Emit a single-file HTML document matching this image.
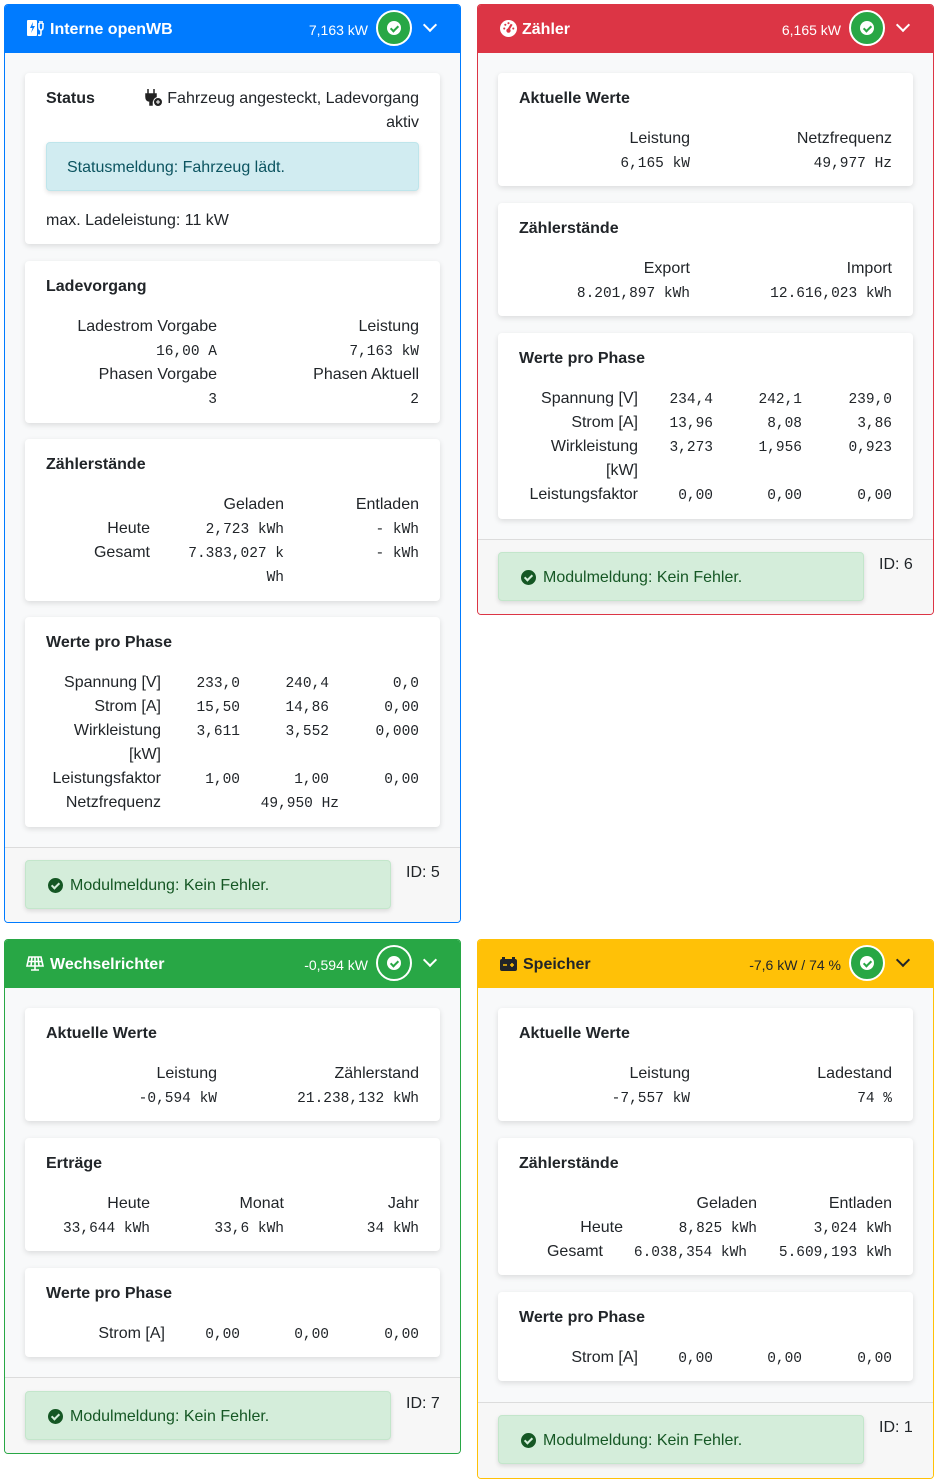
<!DOCTYPE html>
<html><head><meta charset="utf-8">
<style>
*{box-sizing:border-box;margin:0;padding:0}
html,body{width:941px;height:1483px;background:#fff;overflow:hidden}
body{position:relative;font-family:"Liberation Sans",sans-serif;color:#212529;font-size:16px}
.card{position:absolute;border:1px solid;border-radius:4px;overflow:hidden;background:#f8f9fa}
.hdr{position:absolute;left:0;right:0;top:0;height:48px}
.foot{position:absolute;left:0;right:0;bottom:0;background:#f7f7f7;border-top:1px solid #dcdcdc}
.in{position:absolute;background:#fff;border-radius:4px;box-shadow:0 2px 6px rgba(0,0,0,.12)}
.t{position:absolute;line-height:20px;white-space:nowrap;margin-top:2px}
.b{font-weight:bold}
.m{font-family:"Liberation Mono",monospace;font-size:14.5px}
.w{color:#fff}
.alert{position:absolute;background:#d4edda;border:1px solid #c3e6cb;border-radius:4px;box-shadow:0 2px 5px rgba(0,0,0,.12);color:#155724}
.ok{position:absolute;width:36px;height:36px;border-radius:50%;border:2px solid #fff;background:#28a745}
.ok::after{content:"";position:absolute;left:9px;top:9px;width:14px;height:14px;border-radius:50%;background:#fff}
.ok::before{content:"";position:absolute;left:14px;top:12px;width:3px;height:6px;border:solid #28a745;border-width:0 2px 2px 0;transform:rotate(45deg);z-index:2}
.chev{position:absolute;width:10px;height:10px;border:solid #fff;border-width:0 2px 2px 0;transform:rotate(45deg)}
.ci{position:absolute;width:15px;height:15px;border-radius:50%;background:#155724;margin-top:1px}
.ci::after{content:"";position:absolute;left:5px;top:3px;width:3px;height:6px;border:solid #d4edda;border-width:0 2px 2px 0;transform:rotate(45deg)}
</style></head><body>

<!-- Card 1 -->
<div class="card" style="left:4px;top:4px;width:457px;height:919px;border-color:#007bff">
 <div class="hdr" style="background:#007bff"></div>
 <div class="foot" style="height:75px"></div>
</div>
<svg style="position:absolute;left:27px;top:19px" width="18" height="18" viewBox="0 0 18 18"><rect x="0" y="1" width="10" height="16" rx="1" fill="#fff"/><path d="M6 3 L3 9 H5.5 L4 14 L8 7 H5.5 Z" fill="#007bff"/><path d="M12 4 V8 Q12 11 14 11 Q16 11 16 8 V4 M13 2V5 M15 2V5 M14 11 V15 Q14 17 11 16" stroke="#fff" stroke-width="1.6" fill="none"/></svg>
<div class="t b w" style="left:50px;top:18px">Interne openWB</div>
<div class="t w" style="right:573px;top:18px;font-size:14px">7,163 kW</div>
<div class="ok" style="left:376px;top:10px"></div>
<div class="chev" style="left:425px;top:20px"></div>

<div class="in" style="left:25px;top:73px;width:415px;height:171px"></div>
<div class="t b" style="left:46px;top:87px">Status</div>
<svg style="position:absolute;left:145px;top:89px" width="18" height="18" viewBox="0 0 18 18"><path d="M3 0V5 M9 0V5 M1 5H11V8Q11 12 7 12V16H5V12Q1 12 1 8Z" fill="#222" stroke="#222" stroke-width="1.5"/><circle cx="13" cy="13" r="4.5" fill="#222" stroke="#fff"/><path d="M11 13H15M13 11V15" stroke="#fff"/></svg>
<div class="t" style="right:522px;top:87px">Fahrzeug angesteckt, Ladevorgang</div>
<div class="t" style="right:522px;top:111px">aktiv</div>
<div style="position:absolute;left:46px;top:142px;width:373px;height:49px;background:#d1ecf1;border:1px solid #bee5eb;border-radius:4px;box-shadow:0 2px 5px rgba(0,0,0,.12)"></div>
<div class="t" style="left:67px;top:156px;color:#0c5460">Statusmeldung: Fahrzeug lädt.</div>
<div class="t" style="left:46px;top:209px">max. Ladeleistung: 11 kW</div>

<div class="in" style="left:25px;top:261px;width:415px;height:162px"></div>
<div class="t b" style="left:46px;top:275px">Ladevorgang</div>
<div class="t" style="right:724px;top:315px">Ladestrom Vorgabe</div>
<div class="t m" style="right:724px;top:340px">16,00 A</div>
<div class="t" style="right:724px;top:363px">Phasen Vorgabe</div>
<div class="t m" style="right:724px;top:388px">3</div>
<div class="t" style="right:522px;top:315px">Leistung</div>
<div class="t m" style="right:522px;top:340px">7,163 kW</div>
<div class="t" style="right:522px;top:363px">Phasen Aktuell</div>
<div class="t m" style="right:522px;top:388px">2</div>

<div class="in" style="left:25px;top:439px;width:415px;height:162px"></div>
<div class="t b" style="left:46px;top:453px">Zählerstände</div>
<div class="t" style="right:657px;top:493px">Geladen</div>
<div class="t" style="right:522px;top:493px">Entladen</div>
<div class="t" style="right:791px;top:517px">Heute</div>
<div class="t m" style="right:657px;top:518px">2,723 kWh</div>
<div class="t m" style="right:522px;top:518px">- kWh</div>
<div class="t" style="right:791px;top:541px">Gesamt</div>
<div class="t m" style="right:657px;top:542px">7.383,027 k</div>
<div class="t m" style="right:657px;top:566px">Wh</div>
<div class="t m" style="right:522px;top:542px">- kWh</div>

<div class="in" style="left:25px;top:617px;width:415px;height:210px"></div>
<div class="t b" style="left:46px;top:631px">Werte pro Phase</div>
<div class="t" style="right:780px;top:671px">Spannung [V]</div>
<div class="t" style="right:780px;top:695px">Strom [A]</div>
<div class="t" style="right:780px;top:719px">Wirkleistung</div>
<div class="t" style="right:780px;top:743px">[kW]</div>
<div class="t" style="right:780px;top:767px">Leistungsfaktor</div>
<div class="t" style="right:780px;top:791px">Netzfrequenz</div>
<div class="t m" style="right:701px;top:672px">233,0</div><div class="t m" style="right:612px;top:672px">240,4</div><div class="t m" style="right:522px;top:672px">0,0</div>
<div class="t m" style="right:701px;top:696px">15,50</div><div class="t m" style="right:612px;top:696px">14,86</div><div class="t m" style="right:522px;top:696px">0,00</div>
<div class="t m" style="right:701px;top:720px">3,611</div><div class="t m" style="right:612px;top:720px">3,552</div><div class="t m" style="right:522px;top:720px">0,000</div>
<div class="t m" style="right:701px;top:768px">1,00</div><div class="t m" style="right:612px;top:768px">1,00</div><div class="t m" style="right:522px;top:768px">0,00</div>
<div class="t m" style="right:602px;top:792px">49,950 Hz</div>

<div class="alert" style="left:25px;top:860px;width:366px;height:49px"></div>
<div class="ci" style="left:48px;top:877px"></div>
<div class="t" style="left:70px;top:874px;color:#155724">Modulmeldung: Kein Fehler.</div>
<div class="t" style="left:406px;top:861px">ID: 5</div>

<!-- Zähler -->
<div class="card" style="left:477px;top:4px;width:457px;height:611px;border-color:#dc3545">
 <div class="hdr" style="background:#dc3545"></div>
 <div class="foot" style="height:75px"></div>
</div>
<svg style="position:absolute;left:500px;top:20px" width="17" height="17" viewBox="0 0 16 16"><circle cx="8" cy="8" r="8" fill="#fff"/><path d="M8 9 L11 4" stroke="#dc3545" stroke-width="2"/><circle cx="8" cy="10" r="2" fill="#dc3545"/><circle cx="4" cy="8" r="1" fill="#dc3545"/><circle cx="5" cy="4.5" r="1" fill="#dc3545"/><circle cx="8" cy="3" r="1" fill="#dc3545"/><circle cx="12.5" cy="8" r="1" fill="#dc3545"/></svg>
<div class="t b w" style="left:522px;top:18px">Zähler</div>
<div class="t w" style="right:100px;top:18px;font-size:14px">6,165 kW</div>
<div class="ok" style="left:849px;top:10px"></div>
<div class="chev" style="left:898px;top:20px"></div>

<div class="in" style="left:498px;top:73px;width:415px;height:113px"></div>
<div class="t b" style="left:519px;top:87px">Aktuelle Werte</div>
<div class="t" style="right:251px;top:127px">Leistung</div>
<div class="t m" style="right:251px;top:152px">6,165 kW</div>
<div class="t" style="right:49px;top:127px">Netzfrequenz</div>
<div class="t m" style="right:49px;top:152px">49,977 Hz</div>

<div class="in" style="left:498px;top:203px;width:415px;height:113px"></div>
<div class="t b" style="left:519px;top:217px">Zählerstände</div>
<div class="t" style="right:251px;top:257px">Export</div>
<div class="t m" style="right:251px;top:282px">8.201,897 kWh</div>
<div class="t" style="right:49px;top:257px">Import</div>
<div class="t m" style="right:49px;top:282px">12.616,023 kWh</div>

<div class="in" style="left:498px;top:333px;width:415px;height:186px"></div>
<div class="t b" style="left:519px;top:347px">Werte pro Phase</div>
<div class="t" style="right:303px;top:387px">Spannung [V]</div>
<div class="t" style="right:303px;top:411px">Strom [A]</div>
<div class="t" style="right:303px;top:435px">Wirkleistung</div>
<div class="t" style="right:303px;top:459px">[kW]</div>
<div class="t" style="right:303px;top:483px">Leistungsfaktor</div>
<div class="t m" style="right:228px;top:388px">234,4</div><div class="t m" style="right:139px;top:388px">242,1</div><div class="t m" style="right:49px;top:388px">239,0</div>
<div class="t m" style="right:228px;top:412px">13,96</div><div class="t m" style="right:139px;top:412px">8,08</div><div class="t m" style="right:49px;top:412px">3,86</div>
<div class="t m" style="right:228px;top:436px">3,273</div><div class="t m" style="right:139px;top:436px">1,956</div><div class="t m" style="right:49px;top:436px">0,923</div>
<div class="t m" style="right:228px;top:484px">0,00</div><div class="t m" style="right:139px;top:484px">0,00</div><div class="t m" style="right:49px;top:484px">0,00</div>

<div class="alert" style="left:498px;top:552px;width:366px;height:49px"></div>
<div class="ci" style="left:521px;top:569px"></div>
<div class="t" style="left:543px;top:566px;color:#155724">Modulmeldung: Kein Fehler.</div>
<div class="t" style="left:879px;top:553px">ID: 6</div>

<!-- Wechselrichter -->
<div class="card" style="left:4px;top:939px;width:457px;height:515px;border-color:#28a745">
 <div class="hdr" style="background:#28a745"></div>
 <div class="foot" style="height:76px"></div>
</div>
<svg style="position:absolute;left:26px;top:956px" width="18" height="16" viewBox="0 0 18 16"><path d="M3 1H15L17 10H1Z M2 5.5H16 M9 1V10 M6 1L5 10 M12 1L13 10 M9 10V14 M5 14H13" stroke="#fff" stroke-width="1.6" fill="none"/></svg>
<div class="t b w" style="left:50px;top:953px">Wechselrichter</div>
<div class="t w" style="right:573px;top:953px;font-size:14px">-0,594 kW</div>
<div class="ok" style="left:376px;top:945px;background:#28a745"></div>
<div class="chev" style="left:425px;top:955px"></div>

<div class="in" style="left:25px;top:1008px;width:415px;height:113px"></div>
<div class="t b" style="left:46px;top:1022px">Aktuelle Werte</div>
<div class="t" style="right:724px;top:1062px">Leistung</div>
<div class="t m" style="right:724px;top:1087px">-0,594 kW</div>
<div class="t" style="right:522px;top:1062px">Zählerstand</div>
<div class="t m" style="right:522px;top:1087px">21.238,132 kWh</div>

<div class="in" style="left:25px;top:1138px;width:415px;height:113px"></div>
<div class="t b" style="left:46px;top:1152px">Erträge</div>
<div class="t" style="right:791px;top:1192px">Heute</div>
<div class="t m" style="right:791px;top:1217px">33,644 kWh</div>
<div class="t" style="right:657px;top:1192px">Monat</div>
<div class="t m" style="right:657px;top:1217px">33,6 kWh</div>
<div class="t" style="right:522px;top:1192px">Jahr</div>
<div class="t m" style="right:522px;top:1217px">34 kWh</div>

<div class="in" style="left:25px;top:1268px;width:415px;height:89px"></div>
<div class="t b" style="left:46px;top:1282px">Werte pro Phase</div>
<div class="t" style="right:776px;top:1322px">Strom [A]</div>
<div class="t m" style="right:701px;top:1323px">0,00</div><div class="t m" style="right:612px;top:1323px">0,00</div><div class="t m" style="right:522px;top:1323px">0,00</div>

<div class="alert" style="left:25px;top:1391px;width:366px;height:49px"></div>
<div class="ci" style="left:48px;top:1408px"></div>
<div class="t" style="left:70px;top:1405px;color:#155724">Modulmeldung: Kein Fehler.</div>
<div class="t" style="left:406px;top:1392px">ID: 7</div>

<!-- Speicher -->
<div class="card" style="left:477px;top:939px;width:457px;height:540px;border-color:#ffc107">
 <div class="hdr" style="background:#ffc107"></div>
 <div class="foot" style="height:76px"></div>
</div>
<svg style="position:absolute;left:500px;top:957px" width="17" height="14" viewBox="0 0 17 14"><rect x="0" y="2" width="17" height="12" rx="2" fill="#212529"/><rect x="2" y="0" width="3" height="3" fill="#212529"/><rect x="12" y="0" width="3" height="3" fill="#212529"/><path d="M3 8H7 M10 8H14 M12 6V10" stroke="#ffc107" stroke-width="1.5"/></svg>
<div class="t b" style="left:523px;top:953px">Speicher</div>
<div class="t" style="right:100px;top:953px;font-size:14px">-7,6 kW / 74 %</div>
<div class="ok" style="left:849px;top:945px"></div>
<div class="chev" style="left:898px;top:955px;border-color:#212529"></div>

<div class="in" style="left:498px;top:1008px;width:415px;height:113px"></div>
<div class="t b" style="left:519px;top:1022px">Aktuelle Werte</div>
<div class="t" style="right:251px;top:1062px">Leistung</div>
<div class="t m" style="right:251px;top:1087px">-7,557 kW</div>
<div class="t" style="right:49px;top:1062px">Ladestand</div>
<div class="t m" style="right:49px;top:1087px">74 %</div>

<div class="in" style="left:498px;top:1138px;width:415px;height:137px"></div>
<div class="t b" style="left:519px;top:1152px">Zählerstände</div>
<div class="t" style="right:184px;top:1192px">Geladen</div>
<div class="t" style="right:49px;top:1192px">Entladen</div>
<div class="t" style="right:318px;top:1216px">Heute</div>
<div class="t m" style="right:184px;top:1217px">8,825 kWh</div>
<div class="t m" style="right:49px;top:1217px">3,024 kWh</div>
<div class="t" style="right:338px;top:1240px">Gesamt</div>
<div class="t m" style="right:194px;top:1241px">6.038,354 kWh</div>
<div class="t m" style="right:49px;top:1241px">5.609,193 kWh</div>

<div class="in" style="left:498px;top:1292px;width:415px;height:89px"></div>
<div class="t b" style="left:519px;top:1306px">Werte pro Phase</div>
<div class="t" style="right:303px;top:1346px">Strom [A]</div>
<div class="t m" style="right:228px;top:1347px">0,00</div><div class="t m" style="right:139px;top:1347px">0,00</div><div class="t m" style="right:49px;top:1347px">0,00</div>

<div class="alert" style="left:498px;top:1415px;width:366px;height:49px"></div>
<div class="ci" style="left:521px;top:1432px"></div>
<div class="t" style="left:543px;top:1429px;color:#155724">Modulmeldung: Kein Fehler.</div>
<div class="t" style="left:879px;top:1416px">ID: 1</div>

</body></html>
